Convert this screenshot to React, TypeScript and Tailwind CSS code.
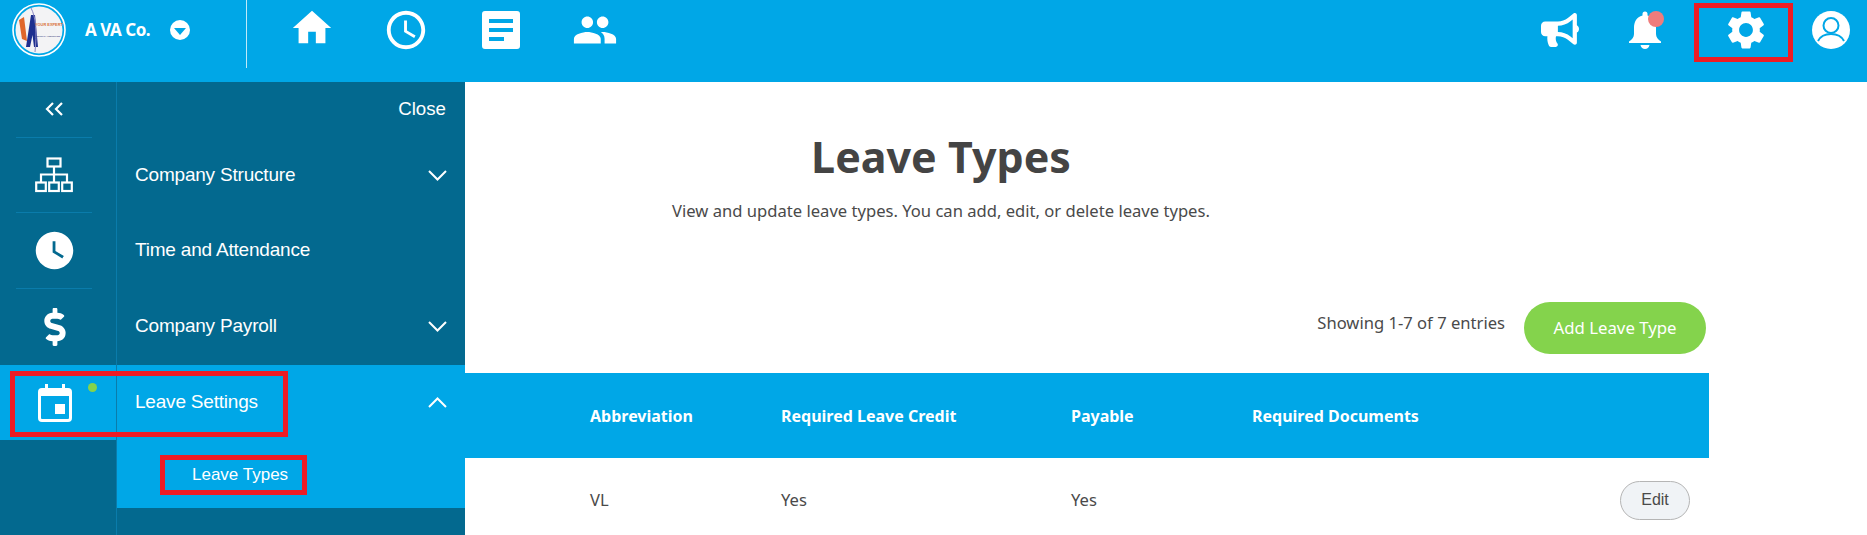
import { FaBullhorn, FaDollarSign } from "react-icons/fa";
import { MdAccessTime, MdHome, MdPeople, MdSettings, MdWatchLater } from "react-icons/md";

function Logo() {
  return (
    <svg width="54" height="54" viewBox="0 0 54 54" className="shrink-0">
      <circle cx="27" cy="27" r="26" fill="#00a7e7" stroke="#ffffff" strokeWidth="1.6" />
      <circle cx="27" cy="27" r="23.5" fill="#f3f3f5" />
      <path d="M7 17 L12 14 L15 38 L10 36 Z" fill="#e0662a" />
      <path d="M14 44 L19 12 L23 12 L26 44 L22 44 L20.5 32 L18 44 Z" fill="#1d2f8f" />
      <path d="M19 5 C24 14 25 30 23 49" fill="none" stroke="#8b88c4" strokeWidth="1" />
      <text x="23" y="23" fontSize="3.9" fontWeight="700" fill="#d9713b" fontFamily="Liberation Sans, sans-serif">
        YOUR EXPERT
      </text>
      <text x="23" y="34" fontSize="2.5" fontWeight="700" fill="#4a4f8a" fontFamily="Liberation Sans, sans-serif">
        VIRTUAL ASSISTANT
      </text>
    </svg>
  );
}

function DocIcon() {
  return (
    <svg width="38" height="38" viewBox="0 0 38 38">
      <path
        d="M3 0h32a3 3 0 0 1 3 3v32a3 3 0 0 1-3 3H3a3 3 0 0 1-3-3V3a3 3 0 0 1 3-3z M7 8v4h24V8z M7 17v4h24v-4z M7 26v4h15v-4z"
        fill="#ffffff"
        fillRule="evenodd"
      />
    </svg>
  );
}

function BellIcon() {
  return (
    <svg width="34" height="38" viewBox="0 0 34 38" fill="#ffffff">
      <path d="M14.5 3a2.5 2.5 0 0 1 5 0v1.6C25.5 6 28 11 28 17v6c0 3 2 5.500 5 7.500v1.500H1v-1.500c3-2 5-4.500 5-7.500v-6c0-6 2.500-11 8.500-12.400z" />
      <path d="M12.500 34h9c-.5 2.500-2.300 4-4.500 4s-4-1.500-4.500-4z" />
    </svg>
  );
}

function AccountIcon() {
  return (
    <svg width="38" height="38" viewBox="0 0 38 38">
      <circle cx="19" cy="19" r="19" fill="#ffffff" />
      <circle cx="19" cy="14.500" r="7.500" fill="none" stroke="#00a7e7" strokeWidth="2" />
      <path d="M6 30c2.500-5 7-7 13-7s10.500 2 13 7" fill="none" stroke="#00a7e7" strokeWidth="2" />
    </svg>
  );
}

function SitemapIcon() {
  return (
    <svg width="38" height="36" viewBox="0 0 38 36" fill="none" stroke="#ffffff" strokeWidth="2.2">
      <rect x="12.500" y="1.500" width="13" height="8" />
      <path d="M19 9.500v8M6 25v-7.500h26V25M19 17.500V25" />
      <rect x="1.200" y="25.500" width="9.600" height="8.500" />
      <rect x="14.200" y="25.500" width="9.600" height="8.500" />
      <rect x="27.200" y="25.500" width="9.600" height="8.500" />
    </svg>
  );
}

function CalendarIcon() {
  return (
    <svg width="34" height="38" viewBox="0 0 34 38">
      <path
        d="M7 0h3v4h14V0h3v4h3a4 4 0 0 1 4 4v26a4 4 0 0 1-4 4H4a4 4 0 0 1-4-4V8a4 4 0 0 1 4-4h3z M3 12v22a1 1 0 0 0 1 1h26a1 1 0 0 0 1-1V12z M17 20h10v10H17z"
        fill="#ffffff"
        fillRule="evenodd"
      />
    </svg>
  );
}

function Chevron({ up }: { up?: boolean }) {
  return (
    <svg width="19" height="11" viewBox="0 0 19 11" fill="none" stroke="#ffffff" strokeWidth="2">
      <path d={up ? "M1 10 L9.500 1.500 L18 10" : "M1 1 L9.500 9.500 L18 1"} />
    </svg>
  );
}

function DoubleChevron() {
  return (
    <svg width="19" height="14" viewBox="0 0 19 14" fill="none" stroke="#ffffff" strokeWidth="2.2">
      <path d="M8 1 L2 7 L8 13 M17 1 L11 7 L17 13" />
    </svg>
  );
}

const menuRow = "flex items-center justify-between pl-[18px] pr-[18px] text-[19px] tracking-[-0.2px] text-white";

export default function App() {
  return (
    <div className="relative flex h-[535px] w-full flex-col overflow-hidden bg-white font-['Liberation_Sans',sans-serif]">
      {/* Top bar */}
      <header className="flex h-[82px] shrink-0 items-start bg-[#00a7e7] text-white">
        <div className="flex h-[68px] w-[247px] shrink-0 items-start border-r border-[#bfe9f9] pl-[12px] pt-[3px]">
          <Logo />
          <span className="ml-[19px] mt-[15px] font-['Noto_Sans',sans-serif] text-[17px] font-bold leading-[24px] tracking-[-0.5px]">
            A VA Co.
          </span>
          <span className="ml-[20px] mt-[17px] flex h-[20px] w-[20px] items-center justify-center rounded-full bg-white">
            <span className="mt-[3px] h-0 w-0 border-x-[6px] border-t-[7px] border-x-transparent border-t-[#00a7e7]" />
          </span>
        </div>
        <nav className="ml-[46px] flex items-center pt-[7px]">
          <MdHome size={46} className="-mx-[4px] -mt-[4px]" />
          <MdAccessTime size={46} className="ml-[52px] -mr-[4px]" />
          <div className="ml-[57px]">
            <DocIcon />
          </div>
          <MdPeople size={46} className="ml-[52px] -mr-[4px]" />
        </nav>
        <div className="ml-auto flex items-center pt-[7px]">
          <FaBullhorn size={38} />
          <div className="relative ml-[49px]">
            <BellIcon />
            <span className="absolute right-[-2px] top-[0px] h-[16px] w-[16px] rounded-full bg-[#ef7c7c]" />
          </div>
          <MdSettings size={46} className="ml-[61px] -mr-[4px]" />
          <div className="ml-[47px]">
            <AccountIcon />
          </div>
        </div>
        <div className="w-[17px] shrink-0" />
      </header>

      <div className="flex min-h-0 flex-1">
        {/* Sidebar */}
        <aside className="flex w-[465px] shrink-0 bg-[#03698f]">
          <div className="flex w-[117px] shrink-0 flex-col border-r border-[#0a7cab] text-white">
            <div className="mx-[16px] flex h-[56px] w-[76px] items-center justify-center border-b border-[#0a7cab] pb-[1px]">
              <DoubleChevron />
            </div>
            <div className="mx-[16px] flex h-[75px] w-[76px] items-center justify-center border-b border-[#0a7cab]">
              <SitemapIcon />
            </div>
            <div className="mx-[16px] flex h-[76px] w-[76px] items-center justify-center border-b border-[#0a7cab]">
              <MdWatchLater size={45} />
            </div>
            <div className="flex h-[76px] items-center justify-center pr-[7px]">
              <FaDollarSign size={38} />
            </div>
            <div className="relative flex h-[75px] items-center justify-center bg-[#00a7e7] pr-[7px]">
              <CalendarIcon />
              <span className="absolute left-[88px] top-[18px] h-[9px] w-[9px] rounded-full bg-[#84d34c]" />
            </div>
          </div>
          <div className="flex min-w-0 flex-1 flex-col">
            <div className="flex h-[56px] items-center justify-end pb-[1px] pr-[19px] text-[18.7px] text-white">Close</div>
            <div className={`${menuRow} h-[74px] pt-[1px]`}>
              <span>Company Structure</span>
              <Chevron />
            </div>
            <div className={`${menuRow} h-[76px] pt-[1px]`}>
              <span>Time and Attendance</span>
            </div>
            <div className={`${menuRow} h-[77px]`}>
              <span>Company Payroll</span>
              <Chevron />
            </div>
            <div className="bg-[#00a7e7]">
              <div className={`${menuRow} h-[75px]`}>
                <span>Leave Settings</span>
                <Chevron up />
              </div>
              <div className="h-[68px] pl-[75px] pt-[1px] text-[17px] leading-[68px] text-white">Leave Types</div>
            </div>
          </div>
        </aside>

        {/* Main content */}
        <main className="min-w-0 flex-1 font-['Noto_Sans',sans-serif] text-[#4a4a4a]">
          <div className="w-[952px] pt-[49px] text-center">
            <h1 className="text-[43px] font-bold leading-[52px] text-[#444444]">Leave Types</h1>
            <p className="mt-[16px] text-[16.6px] leading-[24px]">
              View and update leave types. You can add, edit, or delete leave types.
            </p>
          </div>
          <div className="mt-[79px] flex w-[1241px] items-center justify-end">
            <span className="mb-[10px] text-[16.6px]">Showing 1-7 of 7 entries</span>
            <button className="ml-[19px] h-[52px] w-[182px] rounded-full bg-[#84d34c] text-[16.8px] text-white">
              Add Leave Type
            </button>
          </div>
          <div className="mt-[19px] grid h-[85px] w-[1244px] grid-cols-[191px_290px_181px_1fr] items-center bg-[#00a7e7] pl-[125px] text-[16px] font-bold text-white">
            <span>Abbreviation</span>
            <span>Required Leave Credit</span>
            <span>Payable</span>
            <span>Required Documents</span>
          </div>
          <div className="grid h-[84px] w-[1244px] grid-cols-[191px_290px_181px_1fr] items-center pl-[125px] pr-[19px] text-[16.6px]">
            <span>VL</span>
            <span>Yes</span>
            <span>Yes</span>
            <button className="h-[39px] w-[70px] justify-self-end rounded-full border border-[#b5b5b5] bg-[#f0f3f6] font-['Liberation_Sans',sans-serif] text-[16px] text-[#4a4a4a]">
              Edit
            </button>
          </div>
        </main>
      </div>

      {/* Red annotation boxes */}
      <div className="absolute left-[1694px] top-[3px] h-[59px] w-[99px] border-[5px] border-[#ed1c24]" />
      <div className="absolute left-[10px] top-[371px] h-[66px] w-[278px] border-[5px] border-[#ed1c24]" />
      <div className="absolute left-[160px] top-[455px] h-[40px] w-[147px] border-[5px] border-[#ed1c24]" />
    </div>
  );
}
